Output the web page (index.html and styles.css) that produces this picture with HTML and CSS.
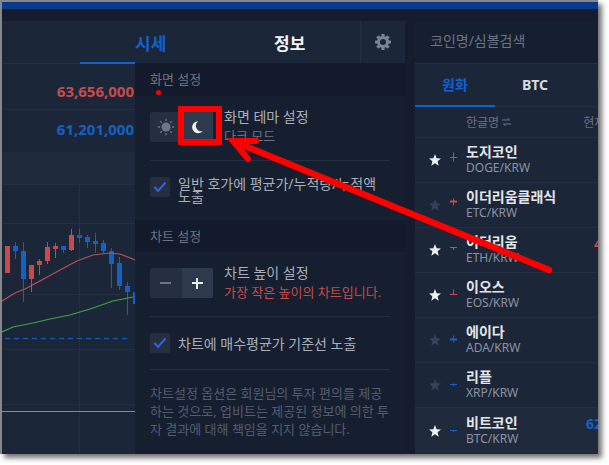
FILE: index.html
```html
<!DOCTYPE html>
<html lang="ko">
<head>
  <meta charset="UTF-8" />
  <meta name="viewport" content="width=device-width, initial-scale=1.0"/>
  <title>화면 테마 설정</title>
  <link rel="stylesheet" href="styles.css">
</head>
<body>
  <div class="window">
    <div class="top-blue"></div>
    <div class="top-dark"></div>
    <div class="main">

      <div class="left">
        <div class="left-head"><span class="left-tab"></span></div>
        <div class="price-row price-row-up"><span class="price up">63,656,000</span></div>
        <div class="price-row price-row-down"><span class="price down">61,201,000</span></div>
        <div class="blank-row"></div>
        <svg class="chart" viewBox="2 184 133 270" width="133" height="270">
          <g stroke="#252f42" stroke-width="1">
            <path d="M2 222.5H135M2 293.5H135M2 348.5H135M2 403.5H135M79.5 184V454"/>
          </g>
          <path d="M2 410.5H135" stroke="#85888f" stroke-width="1"/>
          <path d="M5 337.5H131" stroke="#1261c4" stroke-width="1" stroke-dasharray="5 4"/>
          <g stroke="#c84a4a" fill="#c84a4a">
            <path d="M31.5 264V291M39.5 258V274M47.5 241V263M55.5 242V257M71.5 228V250"/>
          </g>
          <g fill="#c84a4a">
            <rect x="5" y="245" width="5" height="27"/>
            <rect x="29" y="264" width="5" height="14"/>
            <rect x="37" y="260" width="5" height="4"/>
            <rect x="45" y="246" width="5" height="14"/>
            <rect x="53" y="245" width="5" height="3"/>
            <rect x="69" y="234" width="5" height="15"/>
          </g>
          <g stroke="#1261c4">
            <path d="M15.5 241V258M23.5 241V301M63.5 245V252M79.5 228V242M87.5 234V247M95.5 232V252M103.5 239V252M111.5 247V287M119.5 256V289M127.5 281V314"/>
          </g>
          <g fill="#1261c4">
            <rect x="13" y="245" width="5" height="5"/>
            <rect x="21" y="250" width="5" height="28"/>
            <rect x="61" y="245" width="5" height="4"/>
            <rect x="77" y="234" width="5" height="3"/>
            <rect x="85" y="236" width="5" height="5"/>
            <rect x="93" y="240" width="5" height="3"/>
            <rect x="101" y="242" width="5" height="8"/>
            <rect x="109" y="250" width="5" height="13"/>
            <rect x="117" y="262" width="5" height="23"/>
            <rect x="125" y="285" width="5" height="6"/>
            <rect x="133" y="291" width="5" height="12"/>
          </g>
          <polyline fill="none" stroke="#b9514f" stroke-width="1.2" points="2,300 15,292 25,288 40,280 60,269 77,260 93,254 110,252 120,253 135,259"/>
          <polyline fill="none" stroke="#3fa63f" stroke-width="1.2" points="2,331 13,326 33,322 50,318 70,314 90,308 113,300 133,296"/>
        </svg>
      </div>

      <div class="center">
        <div class="center-head">
          <span class="center-tab active">시세</span>
          <span class="center-tab">정보</span>
          <span class="gear-cell">
            <svg width="16" height="16" viewBox="0 0 16 16">
              <g fill="#7b8494">
                <rect x="6.4" y="0" width="3.2" height="16" rx=".5"/>
                <rect x="6.4" y="0" width="3.2" height="16" rx=".5" transform="rotate(45 8 8)"/>
                <rect x="6.4" y="0" width="3.2" height="16" rx=".5" transform="rotate(90 8 8)"/>
                <rect x="6.4" y="0" width="3.2" height="16" rx=".5" transform="rotate(135 8 8)"/>
                <circle cx="8" cy="8" r="6"/>
              </g>
              <circle cx="8" cy="8" r="3" fill="#1c2639"/>
            </svg>
          </span>
        </div>

        <div class="band band-first">화면 설정</div>
        <div class="section section-screen">
          <div class="setting setting-theme">
            <div class="seg">
              <span class="seg-cell">
                <svg width="18" height="18" viewBox="0 0 18 18">
                  <circle cx="9" cy="9" r="4.6" fill="#6d7686"/>
                  <path d="M9 .8V3M9 15V17.2M.8 9H3M15 9H17.2M3.2 3.2L4.8 4.8M13.2 13.2L14.8 14.8M3.2 14.8L4.8 13.2M13.2 4.8L14.8 3.2" stroke="#6d7686" stroke-width="1.3"/>
                </svg>
              </span>
              <span class="seg-cell seg-on">
                <svg width="14" height="14" viewBox="0 0 14 14">
                  <path d="M8.2 1.2A6 6 0 1 0 12.6 11.2A5.6 5.6 0 0 1 8.2 1.2Z" fill="#eef2ea"/>
                </svg>
              </span>
            </div>
            <div class="setting-text">
              <div class="setting-title">화면 테마 설정</div>
              <div class="setting-sub">다크 모드</div>
            </div>
          </div>
          <div class="check-row check-row-first">
            <span class="check">
              <svg width="14" height="12" viewBox="0 0 14 12"><path d="M1.5 6L5 10L12.5 1.5" fill="none" stroke="#2f62e0" stroke-width="2"/></svg>
            </span>
            <span class="check-label">일반 호가에 평균가/누적량/누적액 노출</span>
          </div>
        </div>

        <div class="band">차트 설정</div>
        <div class="section">
          <div class="setting setting-height">
            <div class="seg">
              <span class="seg-cell seg-minus"><i class="minus"></i></span>
              <span class="seg-cell seg-plus"><i class="plus"></i></span>
            </div>
            <div class="setting-text">
              <div class="setting-title">차트 높이 설정</div>
              <div class="setting-warn">가장 작은 높이의 차트입니다.</div>
            </div>
          </div>
          <div class="check-row check-row-second">
            <span class="check">
              <svg width="14" height="12" viewBox="0 0 14 12"><path d="M1.5 6L5 10L12.5 1.5" fill="none" stroke="#2f62e0" stroke-width="2"/></svg>
            </span>
            <span class="check-label">차트에 매수평균가 기준선 노출</span>
          </div>
          <p class="note">차트설정 옵션은 회원님의 투자 편의를 제공하는 것으로, 업비트는 제공된 정보에 의한 투자 결과에 대해 책임을 지지 않습니다.</p>
        </div>
      </div>

      <div class="right">
        <div class="search">코인명/심볼검색</div>
        <div class="market-tabs">
          <span class="market-tab active">원화</span>
          <span class="market-tab">BTC</span>
          <span class="market-tab">USDT</span>
        </div>
        <div class="list-head">
          <span class="list-head-name">한글명
            <svg width="9" height="10" viewBox="0 0 9 10"><path d="M0 3H7.5L5.5 1M9 7H1.5L3.5 9" fill="none" stroke="#6b7484" stroke-width="1"/></svg>
          </span>
          <span class="list-head-price">현재가</span>
        </div>

        <div class="coin">
          <svg class="star" viewBox="0 0 12 12"><polygon class="star-on" points="6,0 7.6,4.2 12,4.5 8.6,7.3 9.7,11.7 6,9.3 2.3,11.7 3.4,7.3 0,4.5 4.4,4.2"/></svg>
          <svg class="tick" viewBox="0 0 8 20"><path d="M3.5 2.5V11.5M0 7.5H7" stroke="#c84a4a" fill="none"/></svg>
          <div class="coin-name"><b>도지코인</b><span>DOGE/KRW</span></div>
        </div>
        <div class="coin">
          <svg class="star" viewBox="0 0 12 12"><polygon class="star-off" points="6,0 7.6,4.2 12,4.5 8.6,7.3 9.7,11.7 6,9.3 2.3,11.7 3.4,7.3 0,4.5 4.4,4.2"/></svg>
          <svg class="tick" viewBox="0 0 8 20"><path d="M3.5 3.5V10.5" stroke="#c84a4a" fill="none"/><path d="M0 5.5H7V7.5H0Z" fill="#c84a4a"/></svg>
          <div class="coin-name"><b>이더리움클래식</b><span>ETC/KRW</span></div>
        </div>
        <div class="coin">
          <svg class="star" viewBox="0 0 12 12"><polygon class="star-on" points="6,0 7.6,4.2 12,4.5 8.6,7.3 9.7,11.7 6,9.3 2.3,11.7 3.4,7.3 0,4.5 4.4,4.2"/></svg>
          <svg class="tick" viewBox="0 0 8 20"><path d="M3.5 7.5V10M0 7.5H7" stroke="#c84a4a" fill="none"/></svg>
          <div class="coin-name"><b>이더리움</b><span>ETH/KRW</span></div>
          <span class="coin-price up">4,000,000</span>
        </div>
        <div class="coin">
          <svg class="star" viewBox="0 0 12 12"><polygon class="star-on" points="6,0 7.6,4.2 12,4.5 8.6,7.3 9.7,11.7 6,9.3 2.3,11.7 3.4,7.3 0,4.5 4.4,4.2"/></svg>
          <svg class="tick" viewBox="0 0 8 20"><path d="M3.5 4.5V9.5M0 9.5H7" stroke="#c84a4a" fill="none"/></svg>
          <div class="coin-name"><b>이오스</b><span>EOS/KRW</span></div>
        </div>
        <div class="coin">
          <svg class="star" viewBox="0 0 12 12"><polygon class="star-off" points="6,0 7.6,4.2 12,4.5 8.6,7.3 9.7,11.7 6,9.3 2.3,11.7 3.4,7.3 0,4.5 4.4,4.2"/></svg>
          <svg class="tick" viewBox="0 0 8 20"><path d="M3.5 5.5V12.5" stroke="#1261c4" fill="none"/><path d="M0 8.5H7V10.5H0Z" fill="#1261c4"/></svg>
          <div class="coin-name"><b>에이다</b><span>ADA/KRW</span></div>
        </div>
        <div class="coin">
          <svg class="star" viewBox="0 0 12 12"><polygon class="star-off" points="6,0 7.6,4.2 12,4.5 8.6,7.3 9.7,11.7 6,9.3 2.3,11.7 3.4,7.3 0,4.5 4.4,4.2"/></svg>
          <svg class="tick" viewBox="0 0 8 20"><path d="M3.5 8.5V11M0 9.5H7" stroke="#1261c4" fill="none"/></svg>
          <div class="coin-name"><b>리플</b><span>XRP/KRW</span></div>
        </div>
        <div class="coin coin-current">
          <svg class="star" viewBox="0 0 12 12"><polygon class="star-on" points="6,0 7.6,4.2 12,4.5 8.6,7.3 9.7,11.7 6,9.3 2.3,11.7 3.4,7.3 0,4.5 4.4,4.2"/></svg>
          <svg class="tick" viewBox="0 0 8 20"><path d="M3.5 9.5V11M0 9.5H7" stroke="#1261c4" fill="none"/></svg>
          <div class="coin-name"><b>비트코인</b><span>BTC/KRW</span></div>
          <span class="coin-price down">62,000,000</span>
        </div>
      </div>
    </div>
  </div>

  <svg class="marks" width="609" height="465" viewBox="0 0 609 465">
    <circle cx="158.5" cy="92.5" r="2.5" fill="#f00"/>
    <rect x="181" y="109" width="38" height="33" fill="none" stroke="#f00" stroke-width="6"/>
    <path d="M549 270L240 144" fill="none" stroke="#f00" stroke-width="6.5" stroke-linecap="round"/>
    <path d="M256 141L233 141L248 159" fill="none" stroke="#f00" stroke-width="6" stroke-linecap="round"/>
  </svg>
</body>
</html>
```

FILE: styles.css
```css
* {
  box-sizing: border-box;
  margin: 0;
  padding: 0;
}

:root {
  --panel: #1c2639;
  --panel-dim: #161f30;
  --band: #121a2c;
  --gap: #141c2d;
  --line: #252f42;
  --up: #c84a4a;
  --down: #1261c4;
  --muted: #6b7484;
  --text: #a9afba;
}

body {
  background-color: #fff;
  font-family: "Noto Sans", "Noto Sans CJK KR", sans-serif;
  width: 609px;
  height: 465px;
  overflow: hidden;
}

.window {
  width: 598px;
  height: 454px;
  border-left: 2px solid #85878b;
  border-top: 2px solid #85878b;
  background-color: var(--gap);
  box-shadow: 4px 4px 5px rgba(0,0,0,0.55);
  overflow: hidden;
}

.top-blue {
  height: 7px;
  background-color: #0b3a8c;
}

.top-dark {
  height: 12px;
}

.main {
  display: grid;
  grid-template-columns: 133px 270px 193px;
  height: 433px;
}

/* left: prices and chart */
.left {
  background-color: var(--panel);
  overflow: hidden;
}

.left-head {
  height: 43px;
  border-bottom: 1px solid var(--line);
  display: flex;
  justify-content: flex-end;
}

.left-tab {
  width: 55px;
  height: 2px;
  margin-top: 41px;
  background-color: #0f62d0;
}

.price-row {
  display: flex;
  align-items: center;
  justify-content: flex-end;
  border-bottom: 1px solid var(--line);
}

.price-row-up {
  height: 46px;
  padding-top: 8px;
}

.price-row-down {
  height: 42px;
  padding-bottom: 4px;
  border-bottom: 0;
}

.blank-row {
  height: 33px;
  background-color: #202a3d;
  border-bottom: 1px solid var(--line);
}

.price {
  font-weight: 700;
  font-size: 15px;
  padding-right: 1px;
}

.up { color: var(--up); }
.down { color: var(--down); }

.chart {
  display: block;
}

/* center: settings */
.center {
  background-color: var(--panel-dim);
}

.center-head {
  height: 42px;
  background-color: var(--panel);
  display: flex;
  align-items: center;
}

.center-tab {
  width: 30px;
  font-size: 17px;
  font-weight: 700;
  color: #f2f4f6;
  text-align: center;
  white-space: nowrap;
}

.center-tab.active {
  color: #0f62d0;
  margin-right: 109px;
}

.gear-cell {
  margin-left: auto;
  width: 45px;
  height: 42px;
  border-left: 1px solid var(--line);
  display: flex;
  align-items: center;
  justify-content: center;
}

.band {
  height: 32px;
  padding: 7px 15px 0;
  font-size: 13px;
  line-height: 18px;
  color: var(--muted);
  background-color: var(--band);
}

.band-first {
  height: 33px;
}

.section {
  padding: 0 15px;
}

.section-screen {
  height: 124px;
}

.setting {
  display: flex;
  height: 65px;
  padding-top: 16px;
  border-bottom: 1px solid var(--line);
}

.seg {
  display: flex;
  width: 63px;
  height: 30px;
  background-color: #262f40;
  border-radius: 2px;
  margin-right: 11px;
  flex: none;
}

.seg-cell {
  flex: 1;
  display: flex;
  align-items: center;
  justify-content: center;
}

.seg-on {
  background-color: #2d394d;
}

.seg-plus {
  background-color: #2d394d;
  border-radius: 0 2px 2px 0;
}

.minus {
  display: block;
  width: 11px;
  height: 2px;
  background-color: #6d7686;
}

.plus {
  display: block;
  position: relative;
  width: 11px;
  height: 2px;
  background-color: #eef1f4;
}

.plus:before {
  content: "";
  position: absolute;
  left: 4.5px;
  top: -4.5px;
  width: 2px;
  height: 11px;
  background-color: #eef1f4;
}

.setting-text {
  margin-top: -4px;
  white-space: nowrap;
}

.setting-title {
  font-size: 14px;
  line-height: 18px;
  color: var(--text);
}

.setting-sub {
  font-size: 13px;
  line-height: 20px;
  color: var(--muted);
}

.setting-warn {
  font-size: 13px;
  line-height: 20px;
  color: var(--up);
}

.check-row {
  display: flex;
}

.check-row-first {
  padding-top: 16px;
}

.check-row-second {
  height: 53px;
  align-items: center;
  border-bottom: 1px solid var(--line);
}

.check {
  flex: none;
  width: 20px;
  height: 20px;
  border-radius: 2px;
  background-color: #262f40;
  margin-right: 8px;
  display: flex;
  align-items: center;
  justify-content: center;
}

.check-label {
  font-size: 14px;
  line-height: 13px;
  color: var(--text);
}

.note {
  margin-top: 14px;
  font-size: 13px;
  line-height: 18px;
  color: #545d6e;
}

/* right: coin list */
.right {
  margin-left: 10px;
  background-color: var(--panel);
  overflow: hidden;
}

.search {
  height: 43px;
  padding: 11px 15px 0;
  font-size: 14px;
  line-height: 18px;
  color: var(--muted);
  background-color: var(--panel-dim);
  border-bottom: 1px solid var(--line);
}

.market-tabs {
  display: flex;
  width: 240px;
  height: 43px;
  border-bottom: 1px solid var(--line);
}

.market-tab {
  flex: none;
  width: 80px;
  line-height: 42px;
  text-align: center;
  font-size: 14px;
  font-weight: 700;
  color: #d8dbe0;
  white-space: nowrap;
}

.market-tab.active {
  color: #0f62d0;
  border-bottom: 2px solid #0f62d0;
  height: 43px;
}

.list-head {
  display: flex;
  width: 240px;
  height: 31px;
  align-items: center;
  font-size: 12px;
  color: var(--muted);
  border-bottom: 1px solid var(--line);
}

.list-head-name {
  margin-left: 51px;
  white-space: nowrap;
}

.list-head-price {
  margin-left: 72px;
  white-space: nowrap;
}

.coin {
  display: flex;
  width: 243px;
  height: 45px;
  align-items: center;
  border-bottom: 1px solid var(--line);
}

.coin-current {
  background-color: #202a3d;
  border-bottom: 0;
}

.star {
  width: 12px;
  height: 12px;
  margin-left: 14px;
  flex: none;
}

.star-on { fill: #eef1ef; }
.star-off { fill: #33425f; }

.tick {
  width: 8px;
  height: 20px;
  margin-left: 9px;
  flex: none;
}

.coin-name {
  margin-left: 8px;
  display: flex;
  flex-direction: column;
  white-space: nowrap;
}

.coin-name b {
  font-size: 14px;
  line-height: 16px;
  color: #e4e6ea;
}

.coin-name span {
  font-size: 12px;
  line-height: 16px;
  color: #8b93a0;
}

.coin-price {
  margin-left: auto;
  font-weight: 700;
  font-size: 14px;
  align-self: flex-start;
  margin-top: 6px;
}

/* annotations drawn over the screenshot */
.marks {
  position: absolute;
  left: 0;
  top: 0;
  pointer-events: none;
}
```
